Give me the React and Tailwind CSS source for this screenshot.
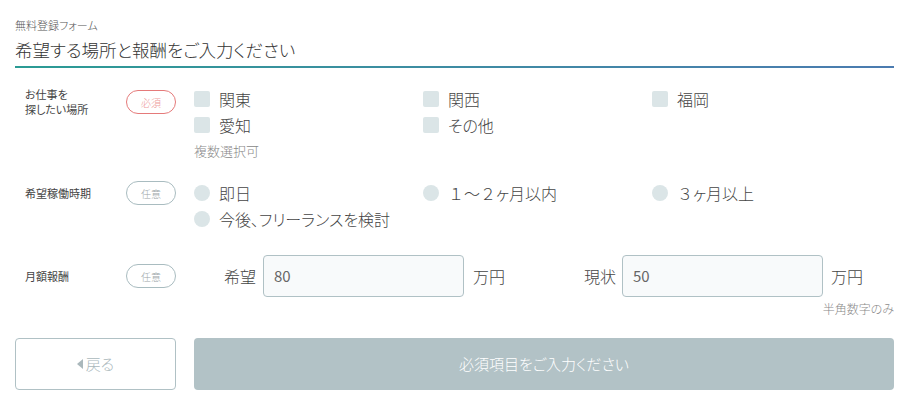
import React from "react";

const font = { fontFamily: '"Noto Sans CJK JP", "Noto Sans", sans-serif' };

function Badge({ required }) {
  return required ? (
    <div className="w-[50px] h-[24px] rounded-full border border-[#e57a7a] text-[#ee9a9a] text-[10px] flex items-center justify-center">必須</div>
  ) : (
    <div className="w-[50px] h-[24px] rounded-full border border-[#a9bcc0] text-[#9aa5a8] text-[10px] flex items-center justify-center">任意</div>
  );
}

function Check({ label }) {
  return (
    <div className="w-[229px] h-[26px] flex items-center">
      <span className="w-[16px] h-[16px] rounded-[2px] bg-[#dbe5e7] shrink-0"></span>
      <span className="ml-[9px] text-[16px] text-[#444]">{label}</span>
    </div>
  );
}

function Radio({ children }) {
  return (
    <div className="w-[229px] h-[26px] flex items-center">
      <span className="w-[16px] h-[16px] rounded-full bg-[#dbe5e7] shrink-0"></span>
      <span className="ml-[9px] text-[16px] text-[#444]">{children}</span>
    </div>
  );
}

export default function App() {
  return (
    <div style={font} className="w-[912px] h-[410px] bg-white px-[15px] pt-[16px] text-[#333] font-light [font-feature-settings:'palt']">
      <div className="text-[11px] leading-[18px] text-[#555]">無料登録フォーム</div>
      <div className="text-[17.5px] leading-[30px] text-[#333] mt-[1px]">希望する場所と報酬をご入力ください</div>
      <div className="h-[2px] mt-[1px] w-[879px] bg-gradient-to-r from-[#2a9b94] to-[#4b7bb0]"></div>

      {/* Row 1 */}
      <div className="flex mt-[22px]">
        <div className="w-[111px] pl-[10px] text-[11px] leading-[15px] text-[#444] font-normal -mt-[3px]">
          お仕事を<br />探したい場所
        </div>
        <div className="w-[68px]">
          <Badge required />
        </div>
        <div className="flex flex-col -mt-[4px]">
          <div className="flex">
            <Check label="関東" />
            <Check label="関西" />
            <Check label="福岡" />
          </div>
          <div className="flex">
            <Check label="愛知" />
            <Check label="その他" />
          </div>
          <div className="text-[13px] text-[#888] leading-[26px]">複数選択可</div>
        </div>
      </div>

      {/* Row 2 */}
      <div className="flex mt-[17px]">
        <div className="w-[111px] pl-[10px] text-[11px] leading-[24px] text-[#444] font-normal">希望稼働時期</div>
        <div className="w-[68px]">
          <Badge />
        </div>
        <div className="flex flex-col -mt-[1px]">
          <div className="flex">
            <Radio>即日</Radio>
            <Radio>
              <span className="[font-feature-settings:normal]">１～２</span>ヶ月以内
            </Radio>
            <Radio>
              <span className="[font-feature-settings:normal]">３</span>ヶ月以上
            </Radio>
          </div>
          <div className="flex">
            <Radio>今後、フリーランスを検討</Radio>
          </div>
        </div>
      </div>

      {/* Row 3 */}
      <div className="flex mt-[23px] items-center h-[42px]">
        <div className="w-[111px] pl-[10px] text-[11px] text-[#444] font-normal">月額報酬</div>
        <div className="w-[68px]">
          <Badge />
        </div>
        <div className="flex items-center">
          <span className="ml-[30px] text-[16px] text-[#444] w-[39px]">希望</span>
          <div className="w-[201px] h-[42px] rounded-[4px] border border-[#b0c1c5] bg-[#f8fafb] flex items-center pl-[10px] text-[15px] font-normal text-[#666]">80</div>
          <span className="ml-[9px] text-[16px] text-[#444] w-[111px]">万円</span>
          <span className="text-[16px] text-[#444] w-[38px]">現状</span>
          <div className="w-[201px] h-[42px] rounded-[4px] border border-[#b0c1c5] bg-[#f8fafb] flex items-center pl-[10px] text-[15px] font-normal text-[#666]">50</div>
          <span className="ml-[8px] text-[16px] text-[#444]">万円</span>
        </div>
      </div>
      <div className="text-right text-[12px] text-[#888] leading-[20px] mt-[2px] w-[879px]">半角数字のみ</div>

      {/* Buttons */}
      <div className="flex mt-[19px] w-[879px]">
        <div className="w-[161px] h-[52px] rounded-[4px] border border-[#b0c1c5] flex items-center justify-center text-[15px] text-[#aab8bc]">
          <svg width="6" height="10" viewBox="0 0 6 10" className="mr-[3px]"><path d="M6 0 L0 5 L6 10 Z" fill="#aab8bc" /></svg>
          戻る
        </div>
        <div className="ml-[18px] flex-1 h-[52px] rounded-[4px] bg-[#b2c2c6] flex items-center justify-center text-[15px] text-white">必須項目をご入力ください</div>
      </div>
    </div>
  );
}
